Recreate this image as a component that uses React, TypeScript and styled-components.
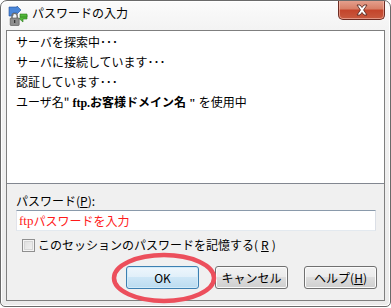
import React from 'react';
import styled, { createGlobalStyle } from 'styled-components';

const GlobalStyle = createGlobalStyle`
  html, body {
    margin: 0;
    padding: 0;
    background: #ffffff;
  }
  body {
    font-family: "Noto Sans CJK JP", "Noto Sans", sans-serif;
    color: #000;
  }
`;

const Window = styled.div`
  position: relative;
  box-sizing: border-box;
  width: 391px;
  height: 307px;
  border: 1px solid #6a6a6a;
  border-radius: 7px 7px 5px 5px;
  background: linear-gradient(to bottom, #fbfbfb 0, #f3f3f3 28px, #ebebeb 100%);
  box-shadow: inset 1px 1px 0 #ffffff, inset -1px -1px 0 #ffffff;
  padding: 0 5px 5px;
  display: flex;
  flex-direction: column;
  overflow: hidden;
`;

const TitleBar = styled.div`
  height: 29px;
  flex: none;
  display: flex;
  align-items: flex-start;
`;

const AppIcon = styled.svg`
  margin: 5px 0 0 2px;
  flex: none;
`;

const TitleText = styled.div`
  margin: 4px 0 0 4px;
  font-size: 12px;
  line-height: 16px;
  flex: 1;
`;

const CloseButton = styled.div`
  width: 47px;
  height: 20px;
  margin-top: -1px;
  box-sizing: border-box;
  border: 1px solid #6d2c23;
  border-top: none;
  border-radius: 0 0 5px 5px;
  background: linear-gradient(to bottom, #e6a391 0, #d88068 45%, #c4452c 55%, #c85a3f 100%);
  box-shadow: inset 0 0 0 1px rgba(255, 210, 200, 0.5);
  display: flex;
  align-items: center;
  justify-content: center;
`;

const Client = styled.div`
  flex: 1;
  border: 1px solid #7f7f7f;
  background: #f0f0f0;
  display: flex;
  flex-direction: column;
  position: relative;
`;

const LogView = styled.div`
  flex: none;
  background: #ffffff;
  border-bottom: 1px solid #828790;
  padding: 1px 9px 0;
  box-sizing: border-box;
  height: 153px;
`;

const LogLine = styled.div`
  font-size: 12px;
  line-height: 20px;
  white-space: nowrap;
`;

const Highlight = styled.span`
  font-family: "Liberation Serif", "Noto Sans CJK JP", serif;
  font-weight: 700;
  font-size: 12px;
`;

const Form = styled.div`
  padding: 9px 8px 0 9px;
  display: flex;
  flex-direction: column;
`;

const Label = styled.div`
  font-size: 12px;
  line-height: 16px;
`;

const Mnemonic = styled.span`
  text-decoration: underline;
`;

const PasswordInput = styled.div`
  margin-top: 1px;
  width: 360px;
  height: 21px;
  box-sizing: border-box;
  border: 1px solid #abadb3;
  border-left-color: #e2e3ea;
  border-right-color: #dbdfe6;
  border-bottom-color: #e3e9ef;
  border-top-color: #8a9aab;
  background: #ffffff;
  padding: 0 2px;
  display: flex;
  align-items: center;
  color: #ff1a1a;
  font-size: 12px;
`;

const RedSerif = styled.span`
  font-family: "Liberation Serif", serif;
  font-size: 13px;
`;

const CheckRow = styled.label`
  margin: 6px 0 0 6px;
  display: flex;
  align-items: center;
  gap: 3px;
  font-size: 12px;
  line-height: 16px;
`;

const CheckBox = styled.span`
  width: 13px;
  height: 13px;
  box-sizing: border-box;
  border: 1px solid #8f8f8f;
  background: linear-gradient(135deg, #dcdcdc 0, #f5f5f5 100%);
  box-shadow: inset 0 0 0 1px #f4f4f4, inset 0 0 0 2px #d6d6d6;
  flex: none;
`;

const ButtonRow = styled.div`
  margin-top: 13px;
  padding-right: 7px;
  display: flex;
  justify-content: flex-end;
  gap: 16px;
  position: relative;
`;

const Button = styled.div<{ $primary?: boolean }>`
  width: 73px;
  height: 23px;
  box-sizing: border-box;
  border: 1px solid ${(p) => (p.$primary ? '#3c7fb1' : '#707070')};
  border-radius: 3px;
  background: ${(p) =>
    p.$primary
      ? 'linear-gradient(to bottom, #eef6fc 0, #e0eff9 50%, #cde6f6 50%, #bcdcf0 100%)'
      : 'linear-gradient(to bottom, #f2f2f2 0, #ebebeb 50%, #dddddd 50%, #cfcfcf 100%)'};
  box-shadow: inset 0 0 0 1px ${(p) => (p.$primary ? '#d2ebf9' : '#fbfbfb')};
  display: flex;
  align-items: center;
  justify-content: center;
  font-size: 12px;
`;

const Annotation = styled.svg`
  position: absolute;
  left: 104px;
  top: 221px;
  pointer-events: none;
`;

export default function App() {
  return (
    <>
      <GlobalStyle />
      <Window>
        <TitleBar>
          <AppIcon width="20" height="20" viewBox="0 0 20 20">
            {/* blue arrow, upper left */}
            <path d="M1 1 H9 V0 L13 4 L9 8 V7 H5 V10 H1 Z" fill="#4a86d8" stroke="#1f4f9a" strokeWidth="0.6" />
            {/* green arrow, right */}
            <path d="M19 9 V13 H15 V16 L11 12.5 L15 9 V9 Z" fill="#52b83a" stroke="#2c7a1c" strokeWidth="0.6" />
            <path d="M12 8 H19 V11 H12 Z" fill="#52b83a" stroke="#2c7a1c" strokeWidth="0.6" />
            {/* padlock */}
            <path d="M4 12 V10 a2.6 2.6 0 0 1 5.2 0 V12" fill="none" stroke="#6f6f6f" strokeWidth="1.4" />
            <rect x="2.2" y="12" width="9" height="7.5" rx="0.8" fill="#8d8d8d" stroke="#4f4f4f" strokeWidth="0.6" />
            <rect x="6" y="14" width="1.3" height="3" fill="#333" />
          </AppIcon>
          <TitleText>パスワードの入力</TitleText>
          <CloseButton>
            <svg width="14" height="12" viewBox="0 0 14 12">
              <path
                d="M2 1 L5 1 L7 3.5 L9 1 L12 1 L8.6 6 L12 11 L9 11 L7 8.5 L5 11 L2 11 L5.4 6 Z"
                fill="#ffffff"
                stroke="#5a2a22"
                strokeWidth="0.9"
                strokeLinejoin="round"
              />
            </svg>
          </CloseButton>
        </TitleBar>
        <Client>
          <LogView>
            <LogLine>サーバを探索中･･･</LogLine>
            <LogLine>サーバに接続しています･･･</LogLine>
            <LogLine>認証しています･･･</LogLine>
            <LogLine>
              ユーザ名"<Highlight> ftp.お客様ドメイン名 " </Highlight>を使用中
            </LogLine>
          </LogView>
          <Form>
            <Label>
              パスワード(<Mnemonic>P</Mnemonic>):
            </Label>
            <PasswordInput>
              <RedSerif>ftp</RedSerif>パスワードを入力
            </PasswordInput>
            <CheckRow>
              <CheckBox />
              このセッションのパスワードを記憶する(<Mnemonic>R</Mnemonic>)
            </CheckRow>
          </Form>
          <ButtonRow>
            <Button $primary>OK</Button>
            <Button>キャンセル</Button>
            <Button>
              ヘルプ(<Mnemonic>H</Mnemonic>)
            </Button>
          </ButtonRow>
          <Annotation width="106" height="52" viewBox="0 0 106 52">
            <ellipse cx="53" cy="26" rx="50" ry="23" fill="none" stroke="#ec4f5c" strokeWidth="4.5" />
          </Annotation>
        </Client>
      </Window>
    </>
  );
}
